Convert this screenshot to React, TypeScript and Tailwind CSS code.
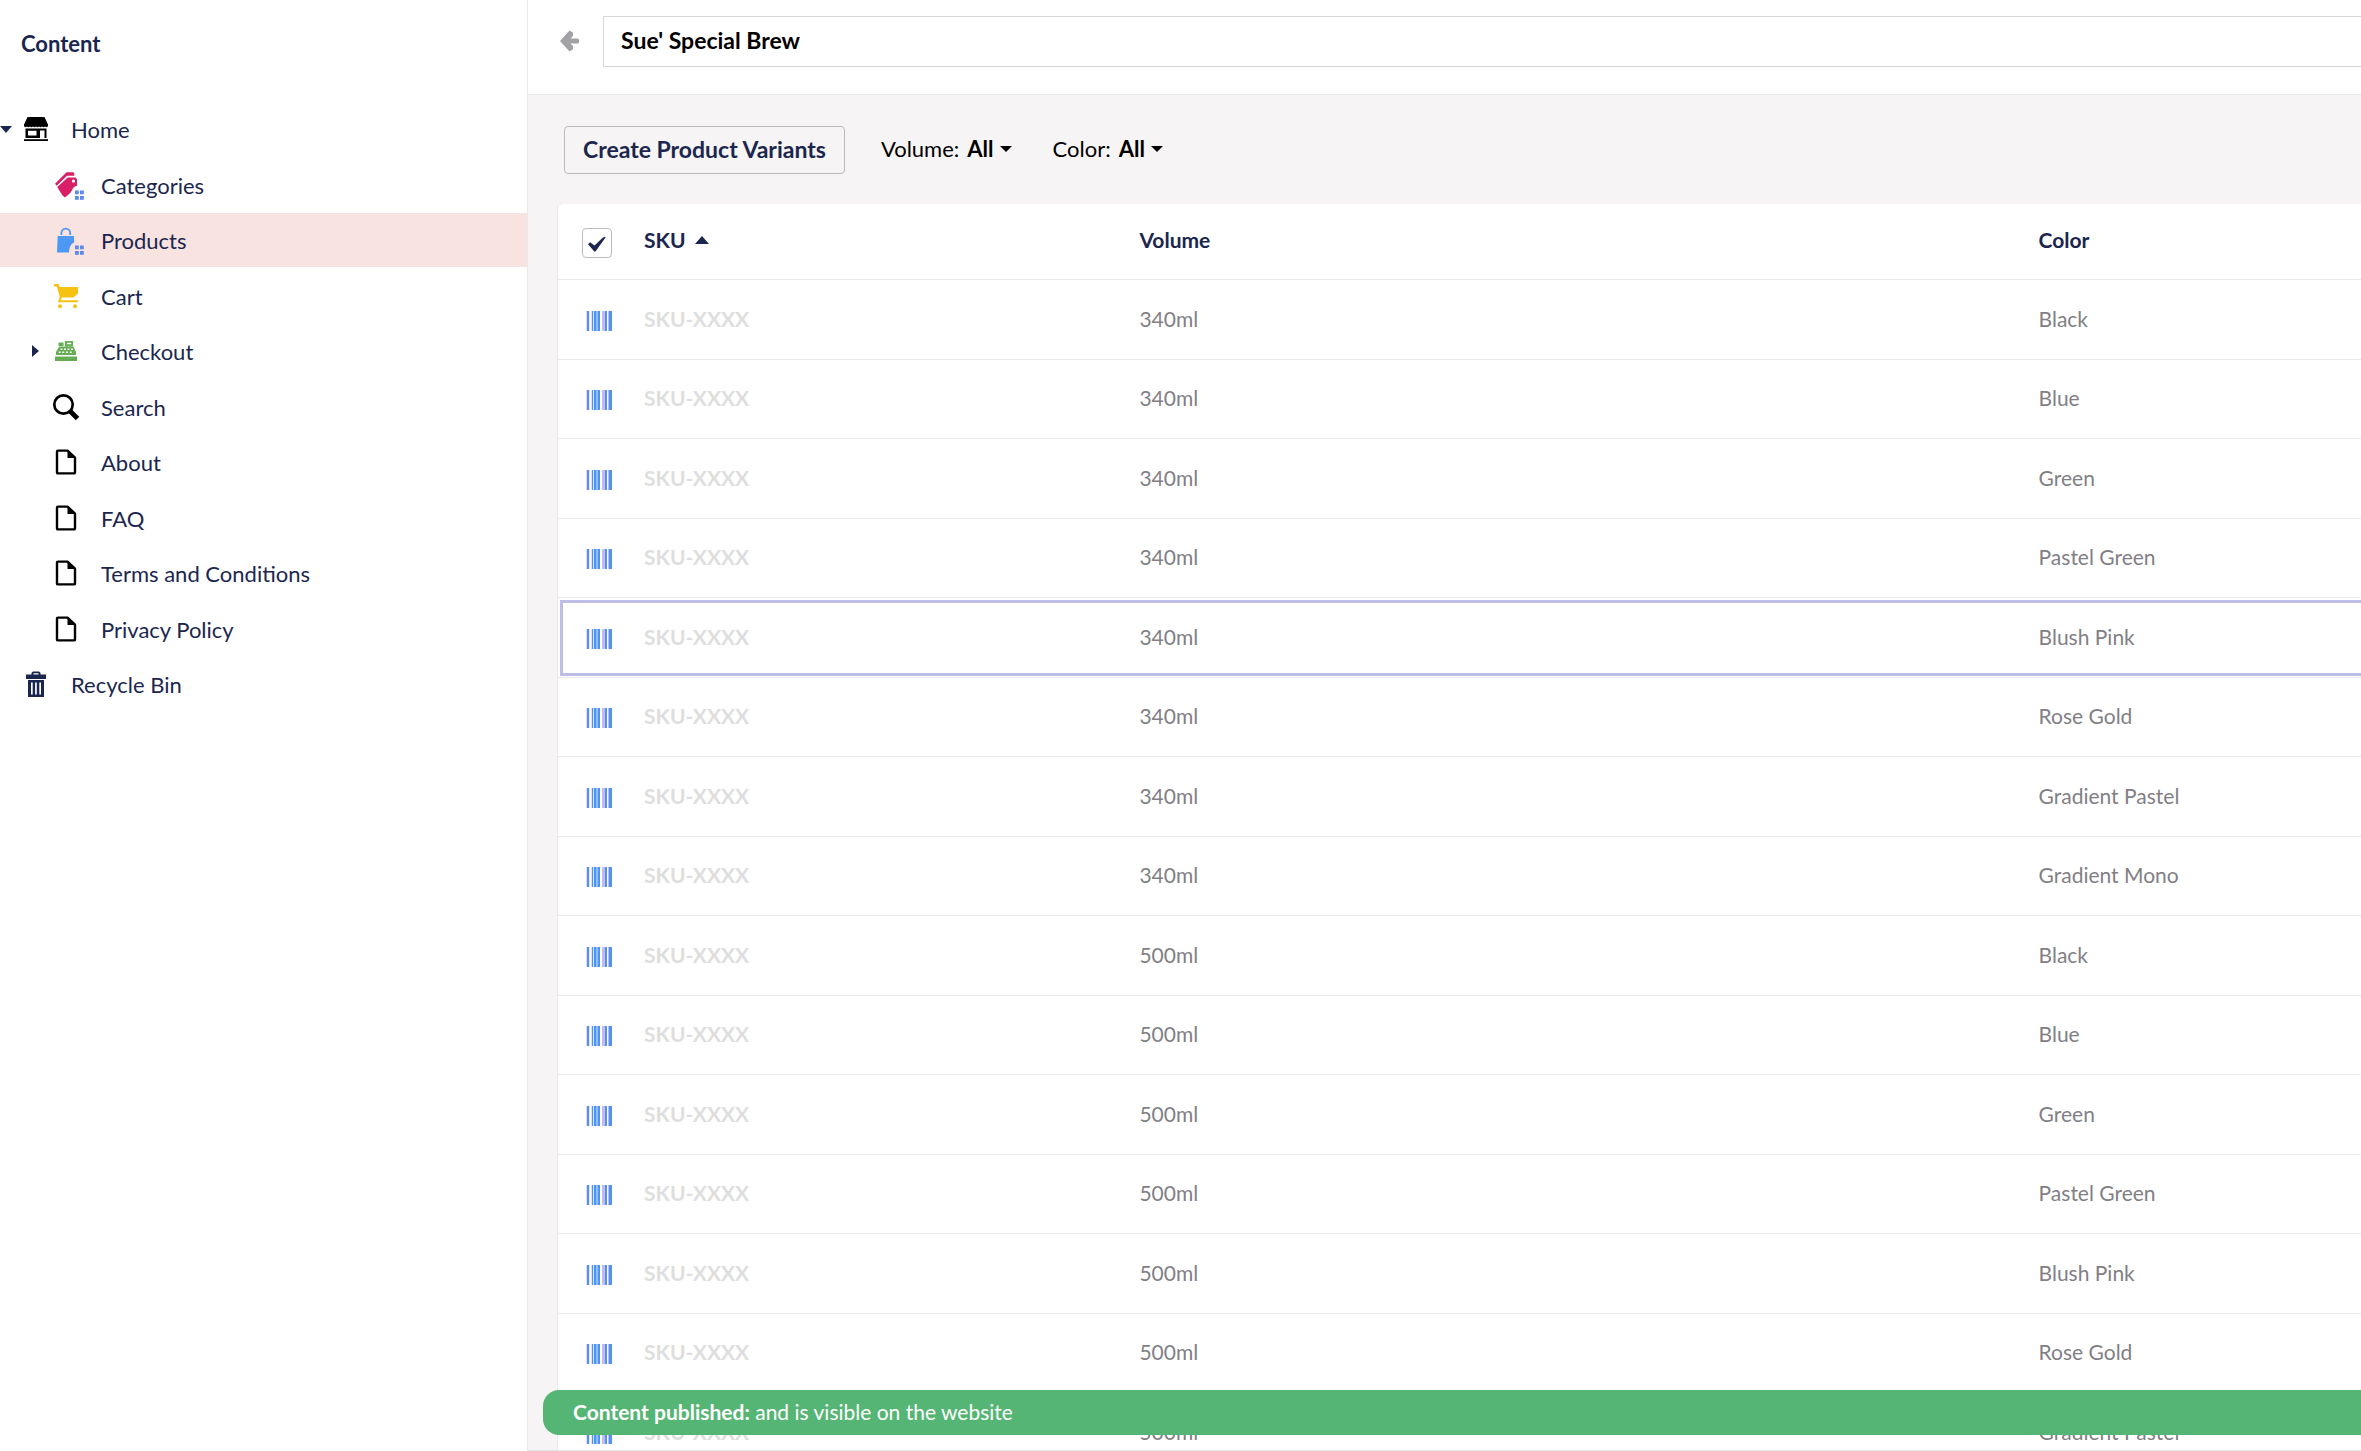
import React from "react";

type IconName =
  | "store"
  | "tags"
  | "bag"
  | "cart"
  | "register"
  | "search"
  | "page"
  | "trash";

function Dots() {
  return (
    <g fill="#5c8af0">
      <rect x="22" y="18.500" width="3.800" height="3.800" />
      <rect x="27" y="18.500" width="3.800" height="3.800" />
      <rect x="22" y="24" width="3.800" height="3.800" />
      <rect x="27" y="24" width="3.800" height="3.800" />
    </g>
  );
}

function TreeIcon({ name }: { name: IconName }) {
  return (
    <svg
      viewBox="0 0 26 26"
      className="h-[26px] w-[26px] shrink-0 overflow-visible"
      aria-hidden="true"
    >
      {name === "store" && (
        <g>
          <path d="M4.5 1h17L25 8.5v1.2a1.6 1.6 0 0 1-3 .6 1.6 1.6 0 0 1-3 0 1.6 1.6 0 0 1-3 0 1.6 1.6 0 0 1-3 0 1.6 1.6 0 0 1-3 0 1.6 1.6 0 0 1-3 0 1.6 1.6 0 0 1-3 0 1.6 1.6 0 0 1-3-.6V8.500z" />
          <path
            fillRule="evenodd"
            d="M2.500 12.500h21v9.500h-2v-7.500h-4.500v7.500H2.500zM5 14.800v4.700h8.500v-4.700z"
          />
          <path d="M1 23.200h24V25H1z" />
        </g>
      )}
      {name === "tags" && (
        <g>
          <path fill="#d91f65" d="M2 11.800 13.500.3h6.800l1 1v2.500h-7.300L3.700 13.700z" />
          <path
            fill="#d91f65"
            fillRule="evenodd"
            d="M4.200 15 14.800 5.500H22.500l1.500 1.500v6.700c-2.500.8-4.200 2-4.800 4.300L17 21.300 12 25.500l-2.500-2zM20.500 7.500a1.600 1.600 0 1 0 0 3.200 1.600 1.600 0 0 0 0-3.200z"
          />
          <Dots />
        </g>
      )}
      {name === "bag" && (
        <g>
          <path
            fill="none"
            stroke="#4d97f5"
            strokeWidth="1.800"
            d="M8.400 8V6a4.400 4.400 0 0 1 8.800 0v2"
          />
          <path fill="#4d97f5" d="M4.700 9h16.200l.3 6.500c-3 1.200-4.800 4-5.200 10H4z" />
          <Dots />
        </g>
      )}
      {name === "cart" && (
        <g fill="#f5c211">
          <path d="M1 1h4.600l1 3H25v6.500l-4.600 4H8.800l-.9 2.800H25v2H4.800l2-5.300L4 4 3.500 3.400H1z" />
          <circle cx="7" cy="23.200" r="2" />
          <circle cx="22" cy="23.200" r="2" />
        </g>
      )}
      {name === "register" && (
        <g>
          <path fill="#64ad52" d="M2 18.500h22V23H2zM5.500 4.500h5V8h-5zM12 3h8v5.500h-8z" />
          <path fill="#64ad52" d="M6.200 8.500h14.300l2.500 5.500V17H3v-3z" />
          <path
            fill="#fff"
            d="M14 4.800h4.200v1.500H14zM7.500 10.500h2v1.400h-2zM11 10.500h2v1.400h-2zM14.500 10.500h2v1.400h-2zM18 10.500h2v1.400h-2zM5.700 13.500h2v1.500h-2zM9.300 13.500h2v1.500h-2zM13 13.500h2v1.500h-2zM16.700 13.500h2v1.500h-2zM11 3h1v5h-1z"
          />
        </g>
      )}
      {name === "search" && (
        <g fill="none" stroke="#000">
          <circle cx="10.500" cy="10.500" r="9.200" strokeWidth="2.700" />
          <path d="m17 17 7.500 7.500" strokeWidth="4.800" />
        </g>
      )}
      {name === "page" && (
        <g>
          <path
            fill="none"
            stroke="#000"
            strokeWidth="2.400"
            strokeLinejoin="round"
            d="M5 1.600h9.500l7.500 7v14.800a1 1 0 0 1-1 1H5a1 1 0 0 1-1-1V2.600a1 1 0 0 1 1-1z"
          />
          <path d="M14.500 1.500 22.500 9h-8z" />
        </g>
      )}
      {name === "trash" && (
        <g fill="#1b264f">
          <path d="M3 3.500h5.500V1.800L10 .5h6l1.500 1.300v1.700H23V8H3zM10.500 2.200v1.300h5V2.200z" fillRule="evenodd" />
          <path
            fillRule="evenodd"
            d="M5 9h16v17H5zM8 11.500v12h1.700v-12zM12.100 11.500v12h1.700v-12zM16.300 11.500v12H18v-12z"
          />
        </g>
      )}
    </svg>
  );
}

type Node = { label: string; icon: IconName; child?: boolean; caret?: "open" | "closed" };

const nodes: Node[] = [
  { label: "Home", icon: "store", caret: "open" },
  { label: "Categories", icon: "tags", child: true },
  { label: "Products", icon: "bag", child: true },
  { label: "Cart", icon: "cart", child: true },
  { label: "Checkout", icon: "register", child: true, caret: "closed" },
  { label: "Search", icon: "search", child: true },
  { label: "About", icon: "page", child: true },
  { label: "FAQ", icon: "page", child: true },
  { label: "Terms and Conditions", icon: "page", child: true },
  { label: "Privacy Policy", icon: "page", child: true },
  { label: "Recycle Bin", icon: "trash" },
];

function Sidebar() {
  return (
    <aside className="w-[528px] shrink-0 border-r border-[#e9e9eb] bg-white text-[#1b264f]">
      <h1 className="px-[21px] pt-7 pb-[42px] text-[22px] leading-8 font-bold">Content</h1>
      <ul>
        {nodes.map((n) => (
          <li key={n.label} className="odd:h-14 even:h-[55px]">
            <a
              href="#"
              aria-current={n.label === "Products" ? "page" : undefined}
              className={
                "flex h-[54px] items-center text-[22px] leading-8 " +
                (n.child ? "pl-[30px] " : "") +
                (n.label === "Products" ? "bg-[#f8e3e0]" : "")
              }
            >
              <span className="flex w-[23px] shrink-0">
                {n.caret === "open" && (
                  <svg viewBox="0 0 12 7" className="h-[7px] w-3" fill="#1b264f" aria-hidden="true">
                    <path d="M0 0h12L6 7z" />
                  </svg>
                )}
                {n.caret === "closed" && (
                  <svg viewBox="0 0 7 12" className="ml-0.5 h-3 w-[7px]" fill="#1b264f" aria-hidden="true">
                    <path d="M0 0v12l7-6z" />
                  </svg>
                )}
              </span>
              <TreeIcon name={n.icon} />
              <span className="ml-[22px] pt-px">{n.label}</span>
            </a>
          </li>
        ))}
      </ul>
    </aside>
  );
}

function Filter({ label, options }: { label: string; options: string[] }) {
  return (
    <label className="flex items-center text-[22px] leading-8 text-black">
      {label}:
      <select className="ml-2 field-sizing-content appearance-none bg-transparent font-bold outline-none">
        <option>All</option>
        {options.map((o) => (
          <option key={o}>{o}</option>
        ))}
      </select>
      <svg viewBox="0 0 12 6" className="ml-1.5 h-1.5 w-3" aria-hidden="true">
        <path d="M0 0h12L6 6z" />
      </svg>
    </label>
  );
}

function Barcode() {
  return (
    <svg viewBox="0 0 26 20" className="mt-0.5 ml-7 h-5 w-[26px]" aria-hidden="true">
      <path fill="#f3d3f0" d="M0 0h1v20H0zM5 0h1v20H5z" />
      <path fill="#c9edfb" d="M3 0h1v20H3zM7 0h1v20H7z" />
      <path fill="#c8b8ee" d="M16 0h3v20h-3zM22 0h1v20h-1z" />
      <path fill="#93bdf8" d="M8 0h6v20H8z" />
      <path fill="#4d94f5" d="M1 0h2v20H1zM6 0h1v20H6zM8 0h2v20H8zM12 0h2v20h-2zM19 0h2v20h-2zM23 0h3v20h-3z" />
    </svg>
  );
}

const colors = [
  "Black",
  "Blue",
  "Green",
  "Pastel Green",
  "Blush Pink",
  "Rose Gold",
  "Gradient Pastel",
  "Gradient Mono",
];
const rows = [
  ...colors.map((color) => ({ volume: "340ml", color })),
  ...colors.slice(0, 7).map((color) => ({ volume: "500ml", color })),
];

function VariantTable() {
  return (
    <div className="-mr-8 ml-[29px] rounded-tl-md border-l border-[#e9e9eb] bg-white">
      <table className="w-full table-fixed border-separate border-spacing-0 text-left">
        <thead className="text-[21px] leading-7 text-[#1b264f]">
          <tr className="h-[76px]">
            <th className="w-[86px] border-b border-[#e9e9eb]">
              <span className="relative ml-6 mt-0.5 flex h-[30px] w-[30px]">
                <input
                  type="checkbox"
                  defaultChecked
                  aria-label="Select all variants"
                  className="peer h-full w-full appearance-none rounded border border-[#bbbabf] bg-white"
                />
                <svg
                  viewBox="0 0 18 16"
                  className="pointer-events-none absolute top-2 left-1.5 hidden h-4 w-[18px] peer-checked:block"
                  fill="#1b264f"
                  aria-hidden="true"
                >
                  <path d="M0 8.200 2 6.300l4.500 3.200L15 1.500l2.500-.8v.8L7.500 15.500H6.300z" />
                </svg>
              </span>
            </th>
            <th className="w-[27%] border-b border-[#e9e9eb] pb-1 font-bold">
              <button type="button" className="flex items-center gap-[9px] font-bold">
                SKU
                <svg viewBox="0 0 14 8" className="h-2 w-3.5" fill="#1b264f" aria-hidden="true">
                  <path d="M0 8h14L7 0z" />
                </svg>
              </button>
            </th>
            <th className="w-[49%] border-b border-[#e9e9eb] pb-1 font-bold">Volume</th>
            <th className="border-b border-[#e9e9eb] pb-1 font-bold">Color</th>
          </tr>
        </thead>
        <tbody className="text-[21px] leading-7 text-[#817f85]">
          {rows.map((r, i) => (
            <tr
              key={i}
              className={
                "odd:h-20 even:h-[79px] " +
                (i === 4 ? "outline-3 -outline-offset-5 outline-[#bcbee6]" : "")
              }
            >
              <td className="border-b border-[#e9e9eb]">
                <Barcode />
              </td>
              <td className="border-b border-[#e9e9eb] pb-0.5 font-bold text-[#dedede]">SKU-XXXX</td>
              <td className="border-b border-[#e9e9eb] pb-0.5">{r.volume}</td>
              <td className="border-b border-[#e9e9eb] pb-0.5">{r.color}</td>
            </tr>
          ))}
        </tbody>
      </table>
    </div>
  );
}

export default function App() {
  return (
    <div className="flex h-screen overflow-hidden bg-white font-['Lato',sans-serif]">
      <Sidebar />
      <main className="relative flex min-w-0 flex-1 flex-col overflow-hidden">
        <header className="flex h-[95px] shrink-0 items-start border-b border-[#e9e9eb] bg-white pt-4">
          <button type="button" aria-label="Back" className="mt-3.5 ml-8 h-[22px] w-[19px]">
            <svg viewBox="0 0 19 22" className="h-[22px] w-[19px]" fill="#a2a1a6" aria-hidden="true">
              <path d="M0 11 9.500.5 13 2.800V6L10.500 8.500H17.500a1.500 1.500 0 0 1 1.500 1.500v2a1.500 1.500 0 0 1-1.500 1.500H10.500L13 16v3.200l-3.500 2.300z" />
            </svg>
          </button>
          <input
            aria-label="Name"
            defaultValue="Sue' Special Brew"
            className="-mr-1 ml-6 h-[51px] min-w-0 flex-1 border border-[#d8d7d9] bg-white px-[17px] pb-1 text-[23px] leading-8 font-bold text-black outline-none"
          />
        </header>
        <div className="min-h-0 flex-1 overflow-hidden border-b border-[#e3e3e5] bg-[#f6f4f4]">
          <div className="flex items-center pt-[31px] pb-[30px] pl-9">
            <button
              type="button"
              className="mr-9 h-12 rounded-[4px] border border-[#bbbabf] px-[18px] pb-0.5 text-[23px] leading-8 font-bold text-[#1b264f]"
            >
              Create Product Variants
            </button>
            <div className="flex gap-[41px] pb-0.5">
              <Filter label="Volume" options={["340ml", "500ml"]} />
              <Filter label="Color" options={colors} />
            </div>
          </div>
          <VariantTable />
        </div>
        <div
          role="status"
          className="absolute right-0 bottom-4 left-[15px] h-[45px] rounded-l-2xl bg-[#55b574] px-[30px] pt-1.5 text-[21px] leading-8 text-white"
        >
          <strong className="font-bold">Content published:</strong> and is visible on the website
        </div>
      </main>
    </div>
  );
}
